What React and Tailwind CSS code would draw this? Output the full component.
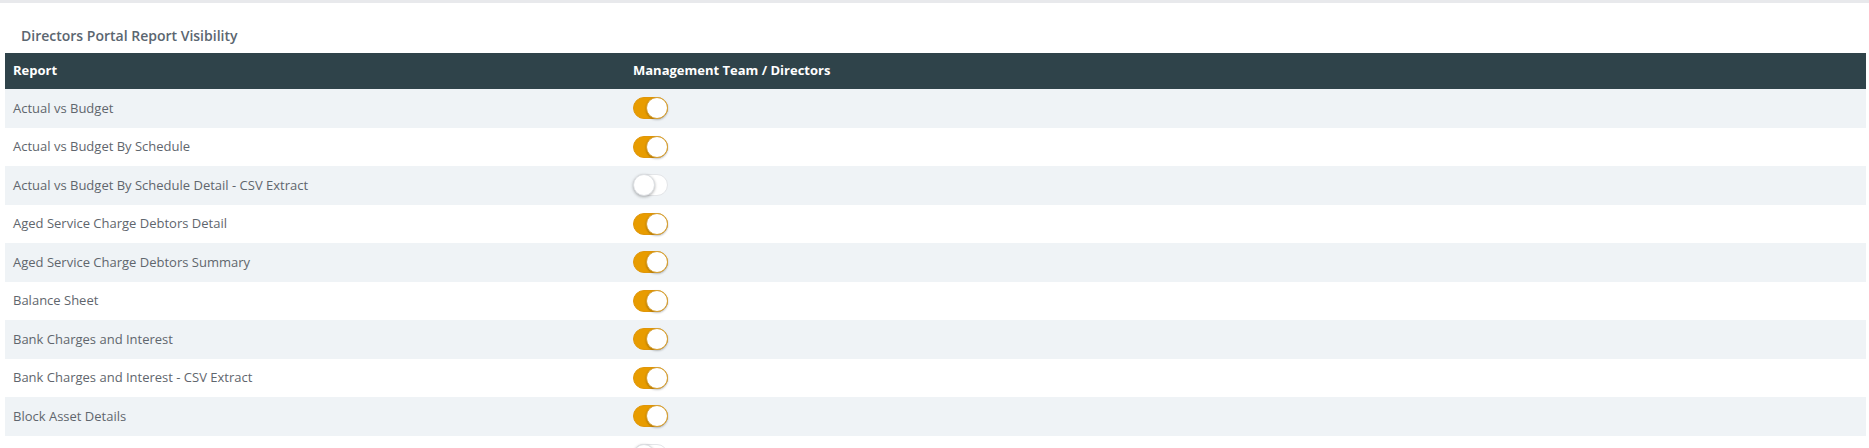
import React, { useState } from "react";

const initialReports = [
  { name: "Actual vs Budget", on: true },
  { name: "Actual vs Budget By Schedule", on: true },
  { name: "Actual vs Budget By Schedule Detail - CSV Extract", on: false },
  { name: "Aged Service Charge Debtors Detail", on: true },
  { name: "Aged Service Charge Debtors Summary", on: true },
  { name: "Balance Sheet", on: true },
  { name: "Bank Charges and Interest", on: true },
  { name: "Bank Charges and Interest - CSV Extract", on: true },
  { name: "Block Asset Details", on: true },
  { name: "Block Asset Details - CSV Extract", on: false },
];

function Toggle({ on, onClick }) {
  return (
    <button
      onClick={onClick}
      className={
        on
          ? "relative w-[35px] h-[22px] rounded-full bg-[#e89c00] border border-[#e0960a]"
          : "relative w-[35px] h-[22px] rounded-full bg-white border border-[#e3e5e8]"
      }
    >
      <span
        className={
          on
            ? "absolute top-[-1px] right-[-1px] w-[22px] h-[22px] rounded-full bg-white border border-[#d8a030] shadow-[0_1px_2px_rgba(0,0,0,0.25)]"
            : "absolute top-[-1px] left-[-1px] w-[22px] h-[22px] rounded-full bg-white border border-[#dcdfe3] shadow-[0_1px_3px_rgba(0,0,0,0.3)]"
        }
      />
    </button>
  );
}

export default function App() {
  const [reports, setReports] = useState(initialReports);

  const toggle = idx =>
    setReports(rs => rs.map((r, i) => (i === idx ? { ...r, on: !r.on } : r)));

  return (
    <div
      className="bg-white min-h-screen text-[13px] text-[#5f666d]"
      style={{ fontFamily: '"Open Sans", "Liberation Sans", sans-serif' }}
    >
      <div className="h-[3px] bg-[#e8e9ec]" />
      <div className="pl-[21px] pt-[24px] pb-[8px] leading-[18px] text-[14px] font-semibold text-[#5b6670]">
        Directors Portal Report Visibility
      </div>
      <div className="ml-[5px] w-[1861px]">
        <div className="grid grid-cols-[620px_1fr] h-[36px] items-center bg-[#2f434a] text-white font-bold">
          <div className="pl-[8px]">Report</div>
          <div className="pl-[8px]">Management Team / Directors</div>
        </div>
        {reports.map((r, i) => (
          <div
            key={r.name}
            className={
              i % 2 === 0
                ? "grid grid-cols-[620px_1fr] h-[38.5px] items-center bg-[#eff3f6]"
                : "grid grid-cols-[620px_1fr] h-[38.5px] items-center bg-white"
            }
          >
            <div className="pl-[8px]">{r.name}</div>
            <div className="pl-[8px] flex items-center">
              <Toggle on={r.on} onClick={() => toggle(i)} />
            </div>
          </div>
        ))}
      </div>
    </div>
  );
}
